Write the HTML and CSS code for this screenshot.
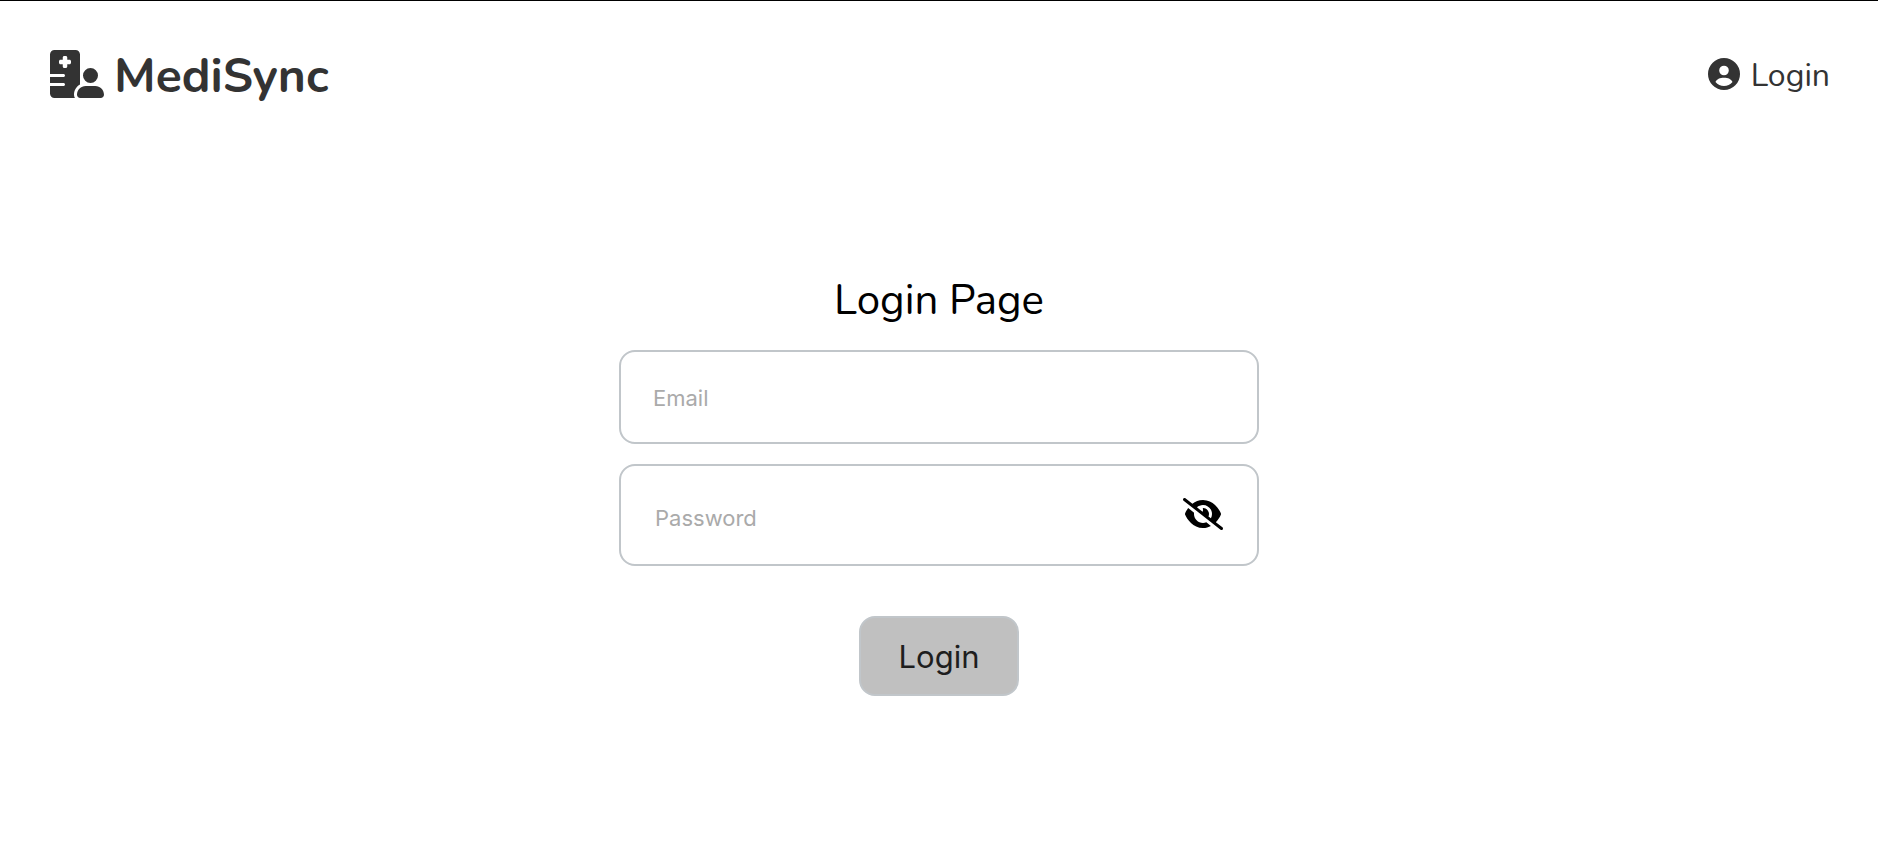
FILE: index.html
```html
<!DOCTYPE html>
<html lang="en">
<head>
    <meta charset="UTF-8">
    <meta name="viewport" content="width=device-width, initial-scale=1.0">
    <title>MediSync</title>
    <link rel="stylesheet" href="styles.css">
</head>
<body>
    <header class="header">
        <a class="logo" href="#">
            <svg class="logo-icon" viewBox="0 0 576 512" aria-hidden="true"><path d="M48 0C21.5 0 0 21.5 0 48V256H144c8.8 0 16 7.2 16 16s-7.2 16-16 16H0v64H144c8.8 0 16 7.2 16 16s-7.2 16-16 16H0v80c0 26.5 21.5 48 48 48H265.9c-6.3-10.2-9.9-22.2-9.9-35.1c0-46.9 25.8-87.8 64-109.2V271.8 48c0-26.5-21.5-48-48-48H48zM152 64h16c8.8 0 16 7.2 16 16v24h24c8.8 0 16 7.2 16 16v16c0 8.8-7.2 16-16 16H184v24c0 8.8-7.2 16-16 16H152c-8.8 0-16-7.2-16-16V152H112c-8.8 0-16-7.2-16-16V120c0-8.8 7.2-16 16-16h24V80c0-8.8 7.2-16 16-16zM512 272a80 80 0 1 0 -160 0 80 80 0 1 0 160 0zM288 477.1c0 19.3 15.6 34.9 34.9 34.9H541.1c19.3 0 34.9-15.6 34.9-34.9c0-51.4-41.7-93.1-93.1-93.1H381.1c-51.4 0-93.1 41.7-93.1 93.1z"/></svg>
            <span>MediSync</span>
        </a>
        <a class="nav-link" href="#">
            <svg class="user-icon" viewBox="0 0 32 32" aria-hidden="true"><path fill-rule="evenodd" d="M16 0a16 16 0 1 0 0 32a16 16 0 1 0 0-32zM16 7.7a4.8 4.8 0 1 1 0 9.6a4.8 4.8 0 1 1 0-9.6zM7.5 24C8.5 21.2 12 19.7 16 19.7S23.5 21.2 24.5 24C22.3 26.6 19.3 28 16 28S9.7 26.6 7.5 24z"/></svg>
            <span>Login</span>
        </a>
    </header>
    <main class="main">
        <h1>Login Page</h1>
        <form class="login-form">
            <div class="field">
                <input type="email" id="email" placeholder="Email" aria-label="Email">
            </div>
            <div class="field password-field">
                <input type="password" id="password" placeholder="Password" aria-label="Password">
                <button type="button" class="toggle" aria-label="Show password">
                    <svg viewBox="0 0 640 512" aria-hidden="true"><path d="M38.8 5.1C28.4-3.1 13.3-1.2 5.1 9.2S-1.2 34.7 9.2 42.9l592 464c10.4 8.2 25.5 6.3 33.7-4.1s6.3-25.5-4.1-33.7L525.6 386.7c39.6-40.6 66.4-86.1 79.9-118.4c3.3-7.9 3.3-16.7 0-24.6c-14.9-35.7-46.2-87.7-93-131.1C465.5 68.8 400.8 32 320 32c-68.2 0-125 26.3-169.3 60.8L38.8 5.1zM223.1 149.5C248.6 126.2 282.7 112 320 112c79.5 0 144 64.5 144 144c0 24.9-6.3 48.3-17.4 68.7L408 294.5c8.4-19.3 10.6-41.4 4.8-63.3c-11.1-41.5-47.8-69.4-88.6-71.1c-5.8-.2-9.2 6.1-7.4 11.7c2.1 6.4 3.3 13.2 3.3 20.3c0 10.2-2.4 19.8-6.6 28.3l-90.3-70.8zM373 389.9c-16.4 6.5-34.3 10.1-53 10.1c-79.5 0-144-64.5-144-144c0-6.9 .5-13.6 1.4-20.2L83.1 161.5C60.3 191.2 44 220.8 34.5 243.7c-3.3 7.9-3.3 16.7 0 24.6c14.9 35.7 46.2 87.7 93 131.1C174.5 443.2 239.2 480 320 480c47.8 0 89.9-12.9 126.2-32.5L373 389.9z"/></svg>
                </button>
            </div>
            <button type="submit" class="login-btn">Login</button>
        </form>
    </main>
    <script>
        const password = document.getElementById('password');
        document.querySelector('.toggle').addEventListener('click', () => {
            password.type = password.type === 'password' ? 'text' : 'password';
        });
    </script>
</body>
</html>
```
FILE: styles.css
```css
* {
    box-sizing: border-box;
}
body {
    margin: 0;
    font-family: Nunito, Lato, sans-serif;
    background-color: #fff;
    color: #000;
    border-top: 1px solid #000;
}
.header {
    display: flex;
    justify-content: space-between;
    align-items: center;
    padding: 37px 48px 40px 50px;
}
.logo,
.nav-link {
    display: flex;
    align-items: center;
    color: #333;
    text-decoration: none;
}
.logo {
    gap: 10px;
    font-size: 48px;
    line-height: 68px;
    font-weight: 700;
}
.logo span,
.nav-link span {
    padding-top: 4px;
}
.logo svg,
.nav-link svg,
.toggle svg {
    display: block;
    fill: currentColor;
}
.logo-icon {
    width: 54px;
    height: 48px;
}
.nav-link {
    gap: 11px;
    font-size: 32px;
    line-height: 44px;
}
.user-icon {
    width: 32px;
    height: 32px;
}
.main {
    display: flex;
    flex-direction: column;
    align-items: center;
    padding: 121px 20px 40px;
}
h1 {
    margin: 0 0 19px;
    font-size: 42px;
    line-height: 60px;
    font-weight: 400;
}
.login-form {
    display: flex;
    flex-direction: column;
    align-items: center;
    width: 100%;
    max-width: 640px;
}
.field {
    display: flex;
    align-items: center;
    width: 100%;
    margin-bottom: 20px;
    padding: 31px 32px 29px;
    border: 2px solid #c1c6ca;
    border-radius: 16px;
}
.field input {
    flex: 1;
    min-width: 0;
    height: 30px;
    padding: 0;
    border: none;
    outline: none;
    background: none;
    font-family: Inter, sans-serif;
    font-size: 22px;
}
.field input::placeholder {
    color: #aaa;
    opacity: 1;
}
.password-field {
    align-items: flex-start;
    margin-bottom: 50px;
    padding: 32px 34px;
}
.password-field input {
    height: 34px;
    padding-top: 5px;
}
.toggle {
    width: 40px;
    height: 32px;
    padding: 0;
    border: none;
    background: none;
    color: #000;
    cursor: pointer;
}
.login-btn {
    padding: 19px 38px 17px;
    border: 2px solid #c1c6ca;
    border-radius: 16px;
    background-color: #c0c0c0;
    color: #1e1e1e;
    font-family: Inter, sans-serif;
    font-size: 31px;
    line-height: 40px;
    cursor: pointer;
}
```
